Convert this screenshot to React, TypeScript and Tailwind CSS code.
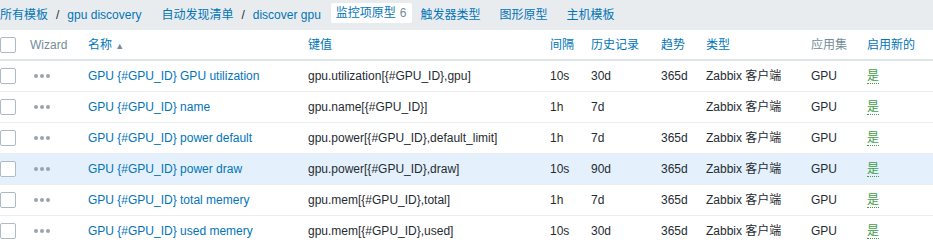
import React from "react";

type Row = {
  name: string;
  key: string;
  interval: string;
  history: string;
  trends: string;
  highlight?: boolean;
};

const rows: Row[] = [
  { name: "GPU {#GPU_ID} GPU utilization", key: "gpu.utilization[{#GPU_ID},gpu]", interval: "10s", history: "30d", trends: "365d" },
  { name: "GPU {#GPU_ID} name", key: "gpu.name[{#GPU_ID}]", interval: "1h", history: "7d", trends: "" },
  { name: "GPU {#GPU_ID} power default", key: "gpu.power[{#GPU_ID},default_limit]", interval: "1h", history: "7d", trends: "365d" },
  { name: "GPU {#GPU_ID} power draw", key: "gpu.power[{#GPU_ID},draw]", interval: "10s", history: "90d", trends: "365d", highlight: true },
  { name: "GPU {#GPU_ID} total memery", key: "gpu.mem[{#GPU_ID},total]", interval: "1h", history: "7d", trends: "365d" },
  { name: "GPU {#GPU_ID} used memery", key: "gpu.mem[{#GPU_ID},used]", interval: "10s", history: "30d", trends: "365d" },
];

const font = { fontFamily: '"Liberation Sans", Arial, "Noto Sans CJK SC", sans-serif' };

function Checkbox() {
  return <div className="w-4 h-4 border border-[#acbbc7] rounded-[2px] bg-white" />;
}

function Dots() {
  return (
    <div className="flex gap-[2px] pl-1">
      <span className="w-1 h-1 rounded-full bg-[#98a5ad]" />
      <span className="w-1 h-1 rounded-full bg-[#98a5ad]" />
      <span className="w-1 h-1 rounded-full bg-[#98a5ad]" />
    </div>
  );
}

export default function App() {
  return (
    <div className="w-[933px] h-[245px] overflow-hidden bg-white text-[12px] text-[#1f2c33]" style={font}>
      <div className="h-[30px] bg-[#e9ecef] flex items-center text-[#0275b8] whitespace-nowrap">
        <span>所有模板</span>
        <span className="mx-[8px] text-[#1f2c33]">/</span>
        <span>gpu discovery</span>
        <span className="ml-[20px]">自动发现清单</span>
        <span className="mx-[8px] text-[#1f2c33]">/</span>
        <span>discover gpu</span>
        <span className="ml-[10px] bg-white rounded-[2px] h-[20px] mb-[4px] px-[5px] flex items-center">
          监控项原型 <span className="ml-1 text-[#768d99]">6</span>
        </span>
        <span className="ml-[9px]">触发器类型</span>
        <span className="ml-[19px]">图形原型</span>
        <span className="ml-[19px]">主机模板</span>
      </div>
      <table className="w-[933px] table-fixed border-collapse">
        <colgroup>
          <col className="w-[30px]" />
          <col className="w-[58px]" />
          <col className="w-[220px]" />
          <col className="w-[242px]" />
          <col className="w-[41px]" />
          <col className="w-[70px]" />
          <col className="w-[45px]" />
          <col className="w-[105px]" />
          <col className="w-[56px]" />
          <col />
        </colgroup>
        <thead>
          <tr className="h-[30px] border-b-2 border-[#dfe4e7]">
            <th className="p-0 font-normal text-left"><Checkbox /></th>
            <th className="p-0 font-normal text-left text-[#768d99]">Wizard</th>
            <th className="p-0 font-normal text-left text-[#0275b8]">
              名称 <span className="text-[#768d99] text-[9px]">▲</span>
            </th>
            <th className="p-0 font-normal text-left text-[#0275b8]">键值</th>
            <th className="p-0 font-normal text-left text-[#0275b8]">间隔</th>
            <th className="p-0 font-normal text-left text-[#0275b8]">历史记录</th>
            <th className="p-0 font-normal text-left text-[#0275b8]">趋势</th>
            <th className="p-0 font-normal text-left text-[#0275b8]">类型</th>
            <th className="p-0 font-normal text-left text-[#768d99]">应用集</th>
            <th className="p-0 font-normal text-left text-[#0275b8]">启用新的</th>
          </tr>
        </thead>
        <tbody>
          {rows.map((r) => (
            <tr key={r.key} className={`h-[31px] border-b border-[#ebeef0] ${r.highlight ? "bg-[#e4f0fb]" : ""}`}>
              <td className="p-0"><Checkbox /></td>
              <td className="p-0"><Dots /></td>
              <td className="p-0 text-[#0275b8] whitespace-nowrap">{r.name}</td>
              <td className="p-0 whitespace-nowrap">{r.key}</td>
              <td className="p-0">{r.interval}</td>
              <td className="p-0">{r.history}</td>
              <td className="p-0">{r.trends}</td>
              <td className="p-0 whitespace-nowrap">Zabbix 客户端</td>
              <td className="p-0">GPU</td>
              <td className="p-0">
                <span className="text-[#429e47] border-b border-dotted border-[#429e47]">是</span>
              </td>
            </tr>
          ))}
        </tbody>
      </table>
    </div>
  );
}
